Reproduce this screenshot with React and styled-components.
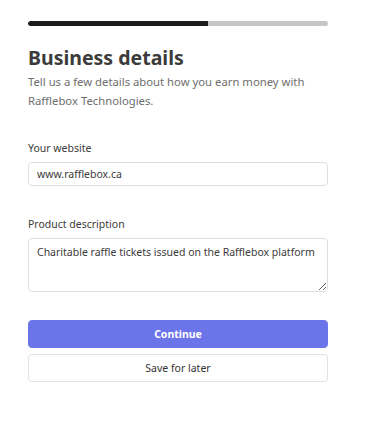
import React from 'react'
import styled, { createGlobalStyle } from 'styled-components'

const GlobalStyle = createGlobalStyle`
  body {
    margin: 0;
    background: #ffffff;
    font-family: 'Noto Sans', 'Open Sans', sans-serif;
  }
`

function App() {
  return (
    <>
      <GlobalStyle />
      <Page>
        <Progress>
          <ProgressFill style={{ width: '60%' }} />
        </Progress>
        <Title>Business details</Title>
        <Subtitle>
          Tell us a few details about how you earn money with Rafflebox Technologies.
        </Subtitle>
        <Field>
          <Label htmlFor='website'>Your website</Label>
          <Input id='website' defaultValue='www.rafflebox.ca' />
        </Field>
        <Field>
          <Label htmlFor='description'>Product description</Label>
          <TextArea
            id='description'
            defaultValue='Charitable raffle tickets issued on the Rafflebox platform'
          />
        </Field>
        <Actions>
          <Button primary>Continue</Button>
          <Button>Save for later</Button>
        </Actions>
      </Page>
    </>
  )
}

export default App

const Page = styled.div`
  width: 300px;
  padding: 21px 0 0 28px;
  display: flex;
  flex-direction: column;
`

const Progress = styled.div`
  height: 5px;
  border-radius: 3px;
  background: #c6c6c6;
  overflow: hidden;
`

const ProgressFill = styled.div`
  height: 100%;
  background: #1c1c1c;
  border-radius: 3px 0 0 3px;
`

const Title = styled.h1`
  margin: 19px 0 0;
  font-size: 19.5px;
  line-height: 26px;
  font-weight: 700;
  color: #3b3b3b;
`

const Subtitle = styled.p`
  margin: 2px 0 0;
  font-size: 11.3px;
  line-height: 18.5px;
  color: #6e6e6e;
`

const Field = styled.div`
  display: flex;
  flex-direction: column;
  margin-top: 31px;
  & + & {
    margin-top: 31px;
  }
`

const Label = styled.label`
  font-size: 10.5px;
  line-height: 15px;
  color: #3b3b3b;
  margin-bottom: 6px;
`

const Input = styled.input`
  box-sizing: border-box;
  height: 24px;
  padding: 0 8px;
  border: 1px solid #dedede;
  border-radius: 4px;
  font-family: inherit;
  font-size: 10.5px;
  color: #3b3b3b;
  outline: none;
`

const TextArea = styled.textarea`
  box-sizing: border-box;
  height: 54px;
  padding: 6px 8px;
  border: 1px solid #dedede;
  border-radius: 4px;
  font-family: inherit;
  font-size: 10.5px;
  line-height: 15px;
  color: #3b3b3b;
  resize: vertical;
  outline: none;
`

const Actions = styled.div`
  display: flex;
  flex-direction: column;
  gap: 6px;
  margin-top: 28px;
`

const Button = styled.button`
  box-sizing: border-box;
  height: 28px;
  border-radius: 4px;
  font-family: inherit;
  font-size: 10.5px;
  cursor: pointer;
  border: 1px solid ${(p) => (p.primary ? '#6b74e8' : '#e2e2e6')};
  background: ${(p) => (p.primary ? '#6b74e8' : '#ffffff')};
  color: ${(p) => (p.primary ? '#ffffff' : '#333333')};
  font-weight: ${(p) => (p.primary ? 700 : 400)};
`
